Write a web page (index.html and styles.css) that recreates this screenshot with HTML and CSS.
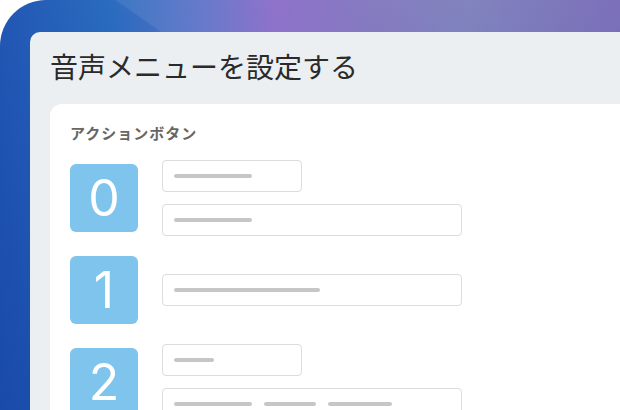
FILE: index.html
```html
<!DOCTYPE html>
<html lang="ja">
<head>
    <meta charset="UTF-8">
    <meta name="viewport" content="width=device-width, initial-scale=1.0">
    <title>音声メニューを設定する</title>
    <link rel="stylesheet" href="styles.css">
</head>
<body>
    <div class="stage">
        <div class="window">
            <h1>音声メニューを設定する</h1>
            <div class="card">
                <p class="label">アクションボタン</p>

                <div class="row">
                    <div class="key">0</div>
                    <div class="fields">
                        <div class="field small"><span class="line" style="width: 78px"></span></div>
                        <div class="field"><span class="line" style="width: 78px"></span></div>
                    </div>
                </div>

                <div class="row">
                    <div class="key">1</div>
                    <div class="fields">
                        <div class="field"><span class="line" style="width: 146px"></span></div>
                    </div>
                </div>

                <div class="row">
                    <div class="key">2</div>
                    <div class="fields">
                        <div class="field small"><span class="line" style="width: 40px"></span></div>
                        <div class="field">
                            <span class="line" style="width: 78px"></span>
                            <span class="line" style="width: 52px"></span>
                            <span class="line" style="width: 64px"></span>
                        </div>
                    </div>
                </div>
            </div>
        </div>
    </div>
</body>
</html>
```

FILE: styles.css
```css
body {
    margin: 0;
    background: #fff;
    font-family: "Noto Sans CJK JP", "Noto Sans", sans-serif;
    overflow: hidden;
}

/* фон с градиентом */
.stage {
    height: 100vh;
    border-radius: 46px 0 0 0;
    padding: 32px 0 0 30px;
    box-sizing: border-box;
    background:
        linear-gradient(35deg, transparent 0%, transparent 58%, rgba(255, 255, 255, 0.08) 58.3%, rgba(255, 255, 255, 0.03) 75%, transparent 100%),
        linear-gradient(180deg, rgba(0, 0, 0, 0) 0%, rgba(10, 50, 150, 0.35) 100%),
        linear-gradient(90deg, #2257b4 0%, #2a6cbf 18%, #5f72c8 33%, #8a6cc8 44%, #8378bf 60%, #7f82bd 75%, #7c70ba 100%);
}

.window {
    height: 100%;
    background: #ebeff2;
    border-radius: 10px 0 0 0;
    padding: 14px 0 0 20px;
    box-sizing: border-box;
}

h1 {
    margin: 0 0 18px;
    font-size: 28px;
    font-weight: 400;
    line-height: 40px;
    color: #2a2a2a;
}

.card {
    height: 100%;
    background: #fff;
    border-radius: 12px 0 0 0;
    padding: 20px 20px 0;
}

.label {
    margin: 0 0 18px;
    font-size: 15px;
    font-weight: 700;
    letter-spacing: 1px;
    line-height: 18px;
    color: #666;
}

.row {
    display: flex;
    align-items: center;
    gap: 24px;
    margin-bottom: 20px;
}

.key {
    width: 68px;
    height: 68px;
    flex-shrink: 0;
    border-radius: 6px;
    background: #7fc4ec;
    color: #fff;
    font-family: Inter, "Liberation Sans", sans-serif;
    font-size: 50px;
    line-height: 68px;
    text-align: center;
}

.fields {
    display: flex;
    flex-direction: column;
    gap: 12px;
}

.field {
    width: 300px;
    height: 32px;
    box-sizing: border-box;
    border: 1px solid #dcdcdc;
    border-radius: 4px;
    padding: 0 11px;
    display: flex;
    align-items: center;
    gap: 12px;
}

.field.small {
    width: 140px;
}

.line {
    height: 4px;
    border-radius: 2px;
    background: #c6c6c6;
}
```
